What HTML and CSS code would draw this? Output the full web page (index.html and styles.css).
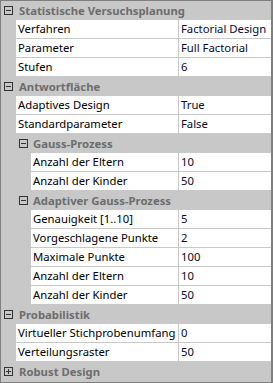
FILE: index.html
```html
<!DOCTYPE html>
<html lang="de">
<head>
    <meta charset="UTF-8">
    <meta name="viewport" content="width=device-width, initial-scale=1.0">
    <title>Eigenschaften</title>
    <link rel="stylesheet" href="styles.css">
</head>
<body>

    <div class="property-grid">

        <!-- Statistische Versuchsplanung -->
        <div class="category">
            <svg class="toggle" width="9" height="9" viewBox="0 0 9 9"><rect x="0.5" y="0.5" width="8" height="8" fill="none" stroke="#333"/><path d="M2 4.5h5" stroke="#333"/></svg>
            <span class="category-label">Statistische Versuchsplanung</span>
        </div>
        <div class="prop"><div class="name">Verfahren</div><div class="value">Factorial Design</div></div>
        <div class="prop"><div class="name">Parameter</div><div class="value">Full Factorial</div></div>
        <div class="prop"><div class="name">Stufen</div><div class="value">6</div></div>

        <!-- Antwortfläche -->
        <div class="category">
            <svg class="toggle" width="9" height="9" viewBox="0 0 9 9"><rect x="0.5" y="0.5" width="8" height="8" fill="none" stroke="#333"/><path d="M2 4.5h5" stroke="#333"/></svg>
            <span class="category-label">Antwortfläche</span>
        </div>
        <div class="prop"><div class="name">Adaptives Design</div><div class="value">True</div></div>
        <div class="prop"><div class="name">Standardparameter</div><div class="value">False</div></div>

        <div class="category sub">
            <svg class="toggle" width="9" height="9" viewBox="0 0 9 9"><rect x="0.5" y="0.5" width="8" height="8" fill="none" stroke="#333"/><path d="M2 4.5h5" stroke="#333"/></svg>
            <span class="category-label">Gauss-Prozess</span>
        </div>
        <div class="prop sub"><div class="name">Anzahl der Eltern</div><div class="value">10</div></div>
        <div class="prop sub"><div class="name">Anzahl der Kinder</div><div class="value">50</div></div>

        <div class="category sub">
            <svg class="toggle" width="9" height="9" viewBox="0 0 9 9"><rect x="0.5" y="0.5" width="8" height="8" fill="none" stroke="#333"/><path d="M2 4.5h5" stroke="#333"/></svg>
            <span class="category-label">Adaptiver Gauss-Prozess</span>
        </div>
        <div class="prop sub"><div class="name">Genauigkeit [1..10]</div><div class="value">5</div></div>
        <div class="prop sub"><div class="name">Vorgeschlagene Punkte</div><div class="value">2</div></div>
        <div class="prop sub"><div class="name">Maximale Punkte</div><div class="value">100</div></div>
        <div class="prop sub"><div class="name">Anzahl der Eltern</div><div class="value">10</div></div>
        <div class="prop sub"><div class="name">Anzahl der Kinder</div><div class="value">50</div></div>

        <!-- Probabilistik -->
        <div class="category">
            <svg class="toggle" width="9" height="9" viewBox="0 0 9 9"><rect x="0.5" y="0.5" width="8" height="8" fill="none" stroke="#333"/><path d="M2 4.5h5" stroke="#333"/></svg>
            <span class="category-label">Probabilistik</span>
        </div>
        <div class="prop"><div class="name">Virtueller Stichprobenumfang</div><div class="value">0</div></div>
        <div class="prop"><div class="name">Verteilungsraster</div><div class="value">50</div></div>

        <!-- Robust Design (zugeklappt) -->
        <div class="category">
            <svg class="toggle" width="9" height="9" viewBox="0 0 9 9"><rect x="0.5" y="0.5" width="8" height="8" fill="none" stroke="#333"/><path d="M2 4.5h5M4.5 2v5" stroke="#333"/></svg>
            <span class="category-label">Robust Design</span>
        </div>

    </div>

</body>
</html>
```

FILE: styles.css
```css
* {
    margin: 0;
    padding: 0;
    box-sizing: border-box;
}

body {
    font-family: 'Noto Sans', sans-serif;
    font-size: 11.3px;
    color: #000;
    background-color: #fff;
    width: 273px;
    height: 383px;
    overflow: hidden;
}

.property-grid {
    width: 273px;
    height: 383px;
    background-color: #c8c8c8;
    border: 1px solid #7f7f7f;
    border-right-width: 2px;
    display: flex;
    flex-direction: column;
}

/* Kategorie-Zeile */
.category {
    display: flex;
    align-items: center;
    height: 19px;
    flex-shrink: 0;
    border-bottom: 1px solid #c8c8c8;
    padding-left: 3px;
}

.category.sub {
    padding-left: 18px;
}

.toggle {
    flex-shrink: 0;
    display: block;
}

.category-label {
    margin-left: 6px;
    font-weight: bold;
    color: #6d6d6d;
    white-space: nowrap;
}

.category.sub .category-label {
    margin-left: 5px;
}

/* Eigenschafts-Zeile */
.prop {
    display: flex;
    height: 19px;
    flex-shrink: 0;
    border-bottom: 1px solid #c8c8c8;
}

.name {
    width: 163px;
    margin-left: 15px;
    padding-left: 2px;
    background-color: #fff;
    border-right: 1px solid #c8c8c8;
    white-space: nowrap;
    overflow: hidden;
    line-height: 18px;
}

.prop.sub .name {
    width: 148px;
    margin-left: 30px;
}

.value {
    flex: 1;
    padding-left: 2px;
    background-color: #fff;
    color: #0a0a28;
    white-space: nowrap;
    overflow: hidden;
    line-height: 18px;
}
```
